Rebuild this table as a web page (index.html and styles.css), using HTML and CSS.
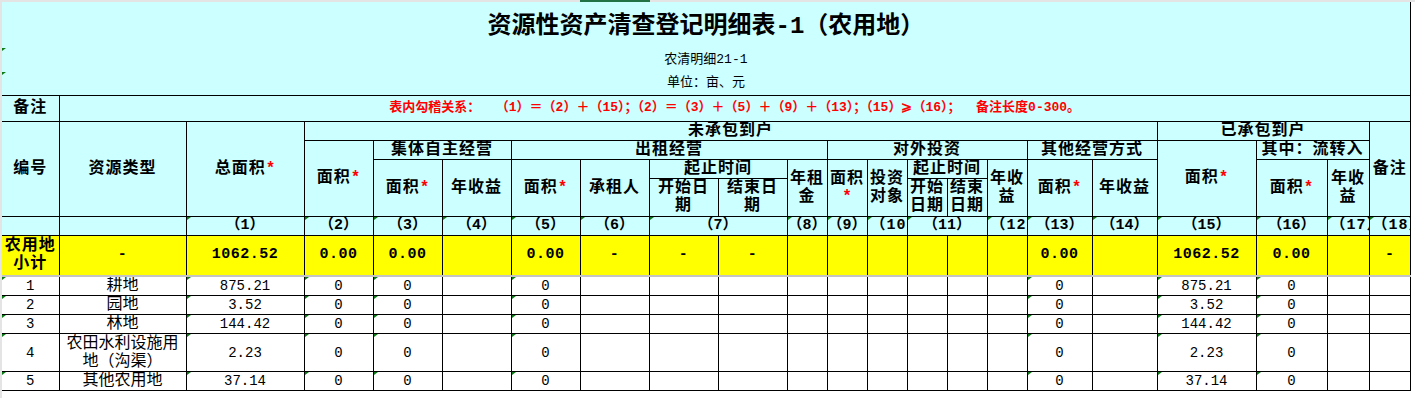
FILE: index.html
```html
<!DOCTYPE html>
<html lang="zh-CN">
<head>
<meta charset="utf-8">
<title>资源性资产清查登记明细表-1（农用地）</title>
<link rel="stylesheet" href="styles.css">
</head>
<body>
<div class="topbar"><span class="gap"></span><span class="sel"></span></div>
<div class="sheet">
<table class="grid">
<colgroup>
<col style="width:57px"><col style="width:127px"><col style="width:118px">
<col style="width:69px"><col style="width:69px"><col style="width:69px"><col style="width:69px"><col style="width:69px"><col style="width:69px"><col style="width:69px">
<col style="width:40px"><col style="width:40px"><col style="width:40px"><col style="width:40px"><col style="width:40px"><col style="width:40px">
<col style="width:65px"><col style="width:65px"><col style="width:99px"><col style="width:71px"><col style="width:42px"><col style="width:41px">
</colgroup>
<tbody>
<tr class="t1"><td colspan="22" class="ttl">资源性资产清查登记明细表-1（农用地）</td></tr>
<tr class="t2"><td colspan="22" class="sub g">农清明细21-1</td></tr>
<tr class="t3"><td colspan="22" class="sub g">单位：亩、元</td></tr>
<tr class="rm">
<td class="hb first">备注</td>
<td colspan="21" class="red">表内勾稽关系：&nbsp;&nbsp;（1）＝（2）＋（15）；（2）＝（3）＋（5）＋（9）＋（13）；（15）⩾（16）；&nbsp;&nbsp;备注长度0-300。</td>
</tr>
<tr class="h1 hd">
<td rowspan="4" class="first">编号</td>
<td rowspan="4">资源类型</td>
<td rowspan="4">总面积<span class="star">*</span></td>
<td colspan="15">未承包到户</td>
<td colspan="3">已承包到户</td>
<td rowspan="4">备注</td>
</tr>
<tr class="h2 hd">
<td rowspan="3">面积<span class="star">*</span></td>
<td colspan="2">集体自主经营</td>
<td colspan="5">出租经营</td>
<td colspan="5">对外投资</td>
<td colspan="2">其他经营方式</td>
<td rowspan="3">面积<span class="star">*</span></td>
<td colspan="2">其中：流转入</td>
</tr>
<tr class="h3 hd">
<td rowspan="2">面积<span class="star">*</span></td>
<td rowspan="2">年收益</td>
<td rowspan="2">面积<span class="star">*</span></td>
<td rowspan="2">承租人</td>
<td colspan="2">起止时间</td>
<td rowspan="2">年租金</td>
<td rowspan="2">面积<span class="star">*</span></td>
<td rowspan="2">投资对象</td>
<td colspan="2">起止时间</td>
<td rowspan="2">年收益</td>
<td rowspan="2">面积<span class="star">*</span></td>
<td rowspan="2">年收益</td>
<td rowspan="2">面积<span class="star">*</span></td>
<td rowspan="2">年收益</td>
</tr>
<tr class="h4 hd">
<td>开始日期</td><td>结束日期</td>
<td>开始日期</td><td>结束日期</td>
</tr>
<tr class="idx hd">
<td class="first"></td><td></td>
<td class="g">（1）</td><td class="g">（2）</td><td class="g">（3）</td><td class="g">（4）</td><td class="g">（5）</td><td class="g">（6）</td>
<td colspan="2" class="g">（7）</td><td class="g">（8）</td><td class="g">（9）</td><td class="g clip">（10）</td>
<td colspan="2" class="g">（11）</td><td class="g clip">（12）</td><td class="g">（13）</td><td class="g">（14）</td>
<td class="g">（15）</td><td class="g">（16）</td><td class="g clip">（17）</td><td class="g clip">（18）</td>
</tr>
<tr class="tot">
<td class="first">农用地小计</td><td class="n">-</td><td class="n">1062.52</td><td class="n">0.00</td><td class="n">0.00</td><td></td>
<td class="n">0.00</td><td class="n">-</td><td class="n">-</td><td class="n">-</td><td></td>
<td></td><td></td><td></td><td></td><td></td>
<td class="n">0.00</td><td></td><td class="n">1062.52</td><td class="n">0.00</td><td></td><td class="n">-</td>
</tr>
<tr class="d1 dr">
<td class="first g n">1</td><td>耕地</td><td class="g n">875.21</td><td class="g n">0</td><td class="g n">0</td><td></td>
<td class="g n">0</td><td></td><td></td><td></td><td></td><td></td><td></td><td></td><td></td><td></td>
<td class="g n">0</td><td></td><td class="g n">875.21</td><td class="g n">0</td><td></td><td></td>
</tr>
<tr class="d2 dr">
<td class="first g n">2</td><td>园地</td><td class="g n">3.52</td><td class="g n">0</td><td class="g n">0</td><td></td>
<td class="g n">0</td><td></td><td></td><td></td><td></td><td></td><td></td><td></td><td></td><td></td>
<td class="g n">0</td><td></td><td class="g n">3.52</td><td class="g n">0</td><td></td><td></td>
</tr>
<tr class="d3 dr">
<td class="first g n">3</td><td>林地</td><td class="g n">144.42</td><td class="g n">0</td><td class="g n">0</td><td></td>
<td class="g n">0</td><td></td><td></td><td></td><td></td><td></td><td></td><td></td><td></td><td></td>
<td class="g n">0</td><td></td><td class="g n">144.42</td><td class="g n">0</td><td></td><td></td>
</tr>
<tr class="d4 dr">
<td class="first g n">4</td><td>农田水利设施用地（沟渠）</td><td class="g n">2.23</td><td class="g n">0</td><td class="g n">0</td><td></td>
<td class="g n">0</td><td></td><td></td><td></td><td></td><td></td><td></td><td></td><td></td><td></td>
<td class="g n">0</td><td></td><td class="g n">2.23</td><td class="g n">0</td><td></td><td></td>
</tr>
<tr class="d5 dr">
<td class="first g n">5</td><td>其他农用地</td><td class="g n">37.14</td><td class="g n">0</td><td class="g n">0</td><td></td>
<td class="g n">0</td><td></td><td></td><td></td><td></td><td></td><td></td><td></td><td></td><td></td>
<td class="g n">0</td><td></td><td class="g n">37.14</td><td class="g n">0</td><td></td><td></td>
</tr>
</tbody>
</table>
</div>
</body>
</html>
```
FILE: styles.css
```css
html, body {
  margin: 0;
  padding: 0;
  background: #ffffff;
}
body {
  font-family: "Liberation Mono", "Noto Sans CJK SC", monospace;
  color: #000;
  height: 398px;
  overflow: hidden;
}
.topbar {
  display: flex;
  height: 2px;
  background: #e4e4e4;
}
.topbar .gap { width: 580px; }
.topbar .sel { width: 70px; background: #217346; }
.sheet {
  border-left: 2px solid #e4e4e4;
  height: 396px;
}
.grid {
  border-collapse: collapse;
  table-layout: fixed;
  width: 1408px;
}
.grid td {
  border: 1px solid #000;
  padding: 0 2px;
  text-align: center;
  vertical-align: middle;
  font-size: 16px;
  line-height: 18px;
  overflow: hidden;
  position: relative;
}
.grid td.first { border-left: none; }

/* title block */
.t1 { height: 46px; }
.t2 { height: 24px; }
.t3 { height: 23px; }
.grid td.ttl, .grid td.sub {
  background: #ccffff;
  border-top: none;
  border-left: none;
  border-bottom: none;
  border-right: 1px solid #000;
}
.grid td.ttl {
  font-size: 24px;
  line-height: 28px;
  font-weight: bold;
  padding-top: 4px;
}
.grid td.sub {
  font-size: 13px;
  line-height: 16px;
}

/* remark row */
.rm { height: 26px; }
.rm td { background: #ccffff; }
.grid td.hb {
  font-weight: bold;
  letter-spacing: 1px;
}
.grid td.red {
  color: #ff0000;
  font-weight: bold;
  font-size: 13px;
  white-space: nowrap;
}

/* header rows */
.h1 { height: 19px; }
.h2 { height: 19px; }
.h3 { height: 19px; }
.h4 { height: 38px; }
.idx { height: 19px; }
.hd td {
  background: #ccffff;
  font-weight: bold;
  letter-spacing: 1px;
}
.star {
  color: #ff0000;
  letter-spacing: 0;
}
.idx td {
  font-size: 15px;
  letter-spacing: 0;
  padding: 0;
  white-space: nowrap;
}
.grid .idx td.clip {
  text-align: left;
  padding-left: 3px;
  letter-spacing: 1px;
}

/* total row */
.tot { height: 41px; }
.tot td {
  background: #ffff00;
  font-weight: bold;
  letter-spacing: 1px;
  border-bottom: 2px solid #c4c4c4;
}
.grid .tot td.n {
  font-size: 15px;
  letter-spacing: 0.5px;
}

/* data rows */
.d1 { height: 19px; }
.d2, .d3, .d5 { height: 19px; }
.d4 { height: 38px; }
.dr td { background: #ffffff; }
.grid .dr td.n { font-size: 14px; }

/* green error indicators */
.grid td.g::before {
  content: "";
  position: absolute;
  left: 0;
  top: 0;
  width: 0;
  height: 0;
  border-top: 3px solid #0b7a16;
  border-right: 4px solid transparent;
}
```
